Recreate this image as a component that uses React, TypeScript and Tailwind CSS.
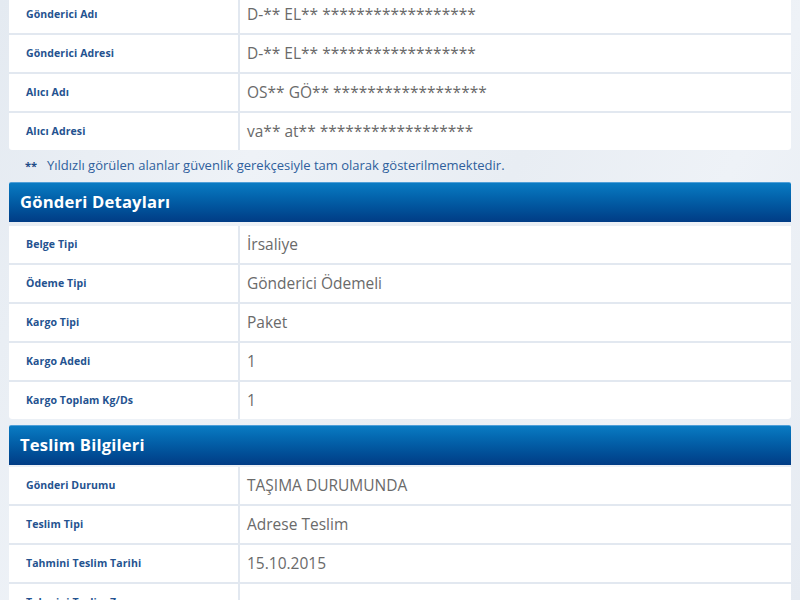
const senderRows = [
  { label: "Gönderici Adı", value: "D-** EL** ******************" },
  { label: "Gönderici Adresi", value: "D-** EL** ******************" },
  { label: "Alıcı Adı", value: "OS** GÖ** ******************" },
  { label: "Alıcı Adresi", value: "va** at** ******************" },
];

const detailRows = [
  { label: "Belge Tipi", value: "İrsaliye" },
  { label: "Ödeme Tipi", value: "Gönderici Ödemeli" },
  { label: "Kargo Tipi", value: "Paket" },
  { label: "Kargo Adedi", value: "1" },
  { label: "Kargo Toplam Kg/Ds", value: "1" },
];

const deliveryRows = [
  { label: "Gönderi Durumu", value: "TAŞIMA DURUMUNDA" },
  { label: "Teslim Tipi", value: "Adrese Teslim" },
  { label: "Tahmini Teslim Tarihi", value: "15.10.2015" },
  { label: "Tahmini Teslim Zamanı", value: "" },
];

interface Row {
  label: string;
  value: string;
}

const InfoTable = ({ rows, rounded }: { rows: Row[]; rounded?: boolean }) => {
  return (
    <div
      className={`flex flex-col gap-[2px] bg-[#e2e8f0] overflow-hidden ${
        rounded ? "rounded-b-[3px]" : ""
      }`}
    >
      {rows.map((r) => (
        <div key={r.label} className="grid grid-cols-[229px_1fr] gap-x-[2px] h-[37px] shrink-0">
          <div className="bg-white flex items-center pl-[17px] text-[10.5px] font-bold tracking-[0.1px] text-[#24528f]">
            {r.label}
          </div>
          <div className="bg-white flex items-center pl-[7px] text-[15.5px] text-[#6a6a6a]">
            {r.value}
          </div>
        </div>
      ))}
    </div>
  );
};

const SectionHeader = ({ title, tight }: { title: string; tight?: boolean }) => {
  return (
    <div
      className={`h-[40px] flex items-center px-[11px] border-t border-[#4f9fd8] bg-gradient-to-b from-[#0a7bc3] to-[#013c85] rounded-t-[2px] ${
        tight ? "mb-[2px]" : "mb-[4px]"
      }`}
    >
      <span className="text-white font-bold text-[16.6px] tracking-[0.2px]">{title}</span>
    </div>
  );
};

export default function App() {
  return (
    <div
      className="w-[800px] h-[600px] overflow-hidden bg-[#e9eef4] bg-[linear-gradient(115deg,#e4eaf1_0%,#eef2f7_30%,#e8edf3_55%,#eef2f7_75%,#e6ebf2_100%)] px-[9px]"
      style={{ fontFamily: '"Open Sans", "Noto Sans", sans-serif' }}
    >
      <div className="-mt-[4px]">
        <InfoTable rows={senderRows} rounded />
      </div>

      <div className="h-[32px] flex items-center pl-[16px] text-[13px] text-[#2f5f9c]">
        <span className="font-bold text-[#1d4a85] mr-[10px] text-[11px]">**</span>
        Yıldızlı görülen alanlar güvenlik gerekçesiyle tam olarak gösterilmemektedir.
      </div>

      <SectionHeader title="Gönderi Detayları" />
      <InfoTable rows={detailRows} rounded />

      <div className="h-[6px]" />

      <SectionHeader title="Teslim Bilgileri" tight />
      <InfoTable rows={deliveryRows} />
    </div>
  );
}
